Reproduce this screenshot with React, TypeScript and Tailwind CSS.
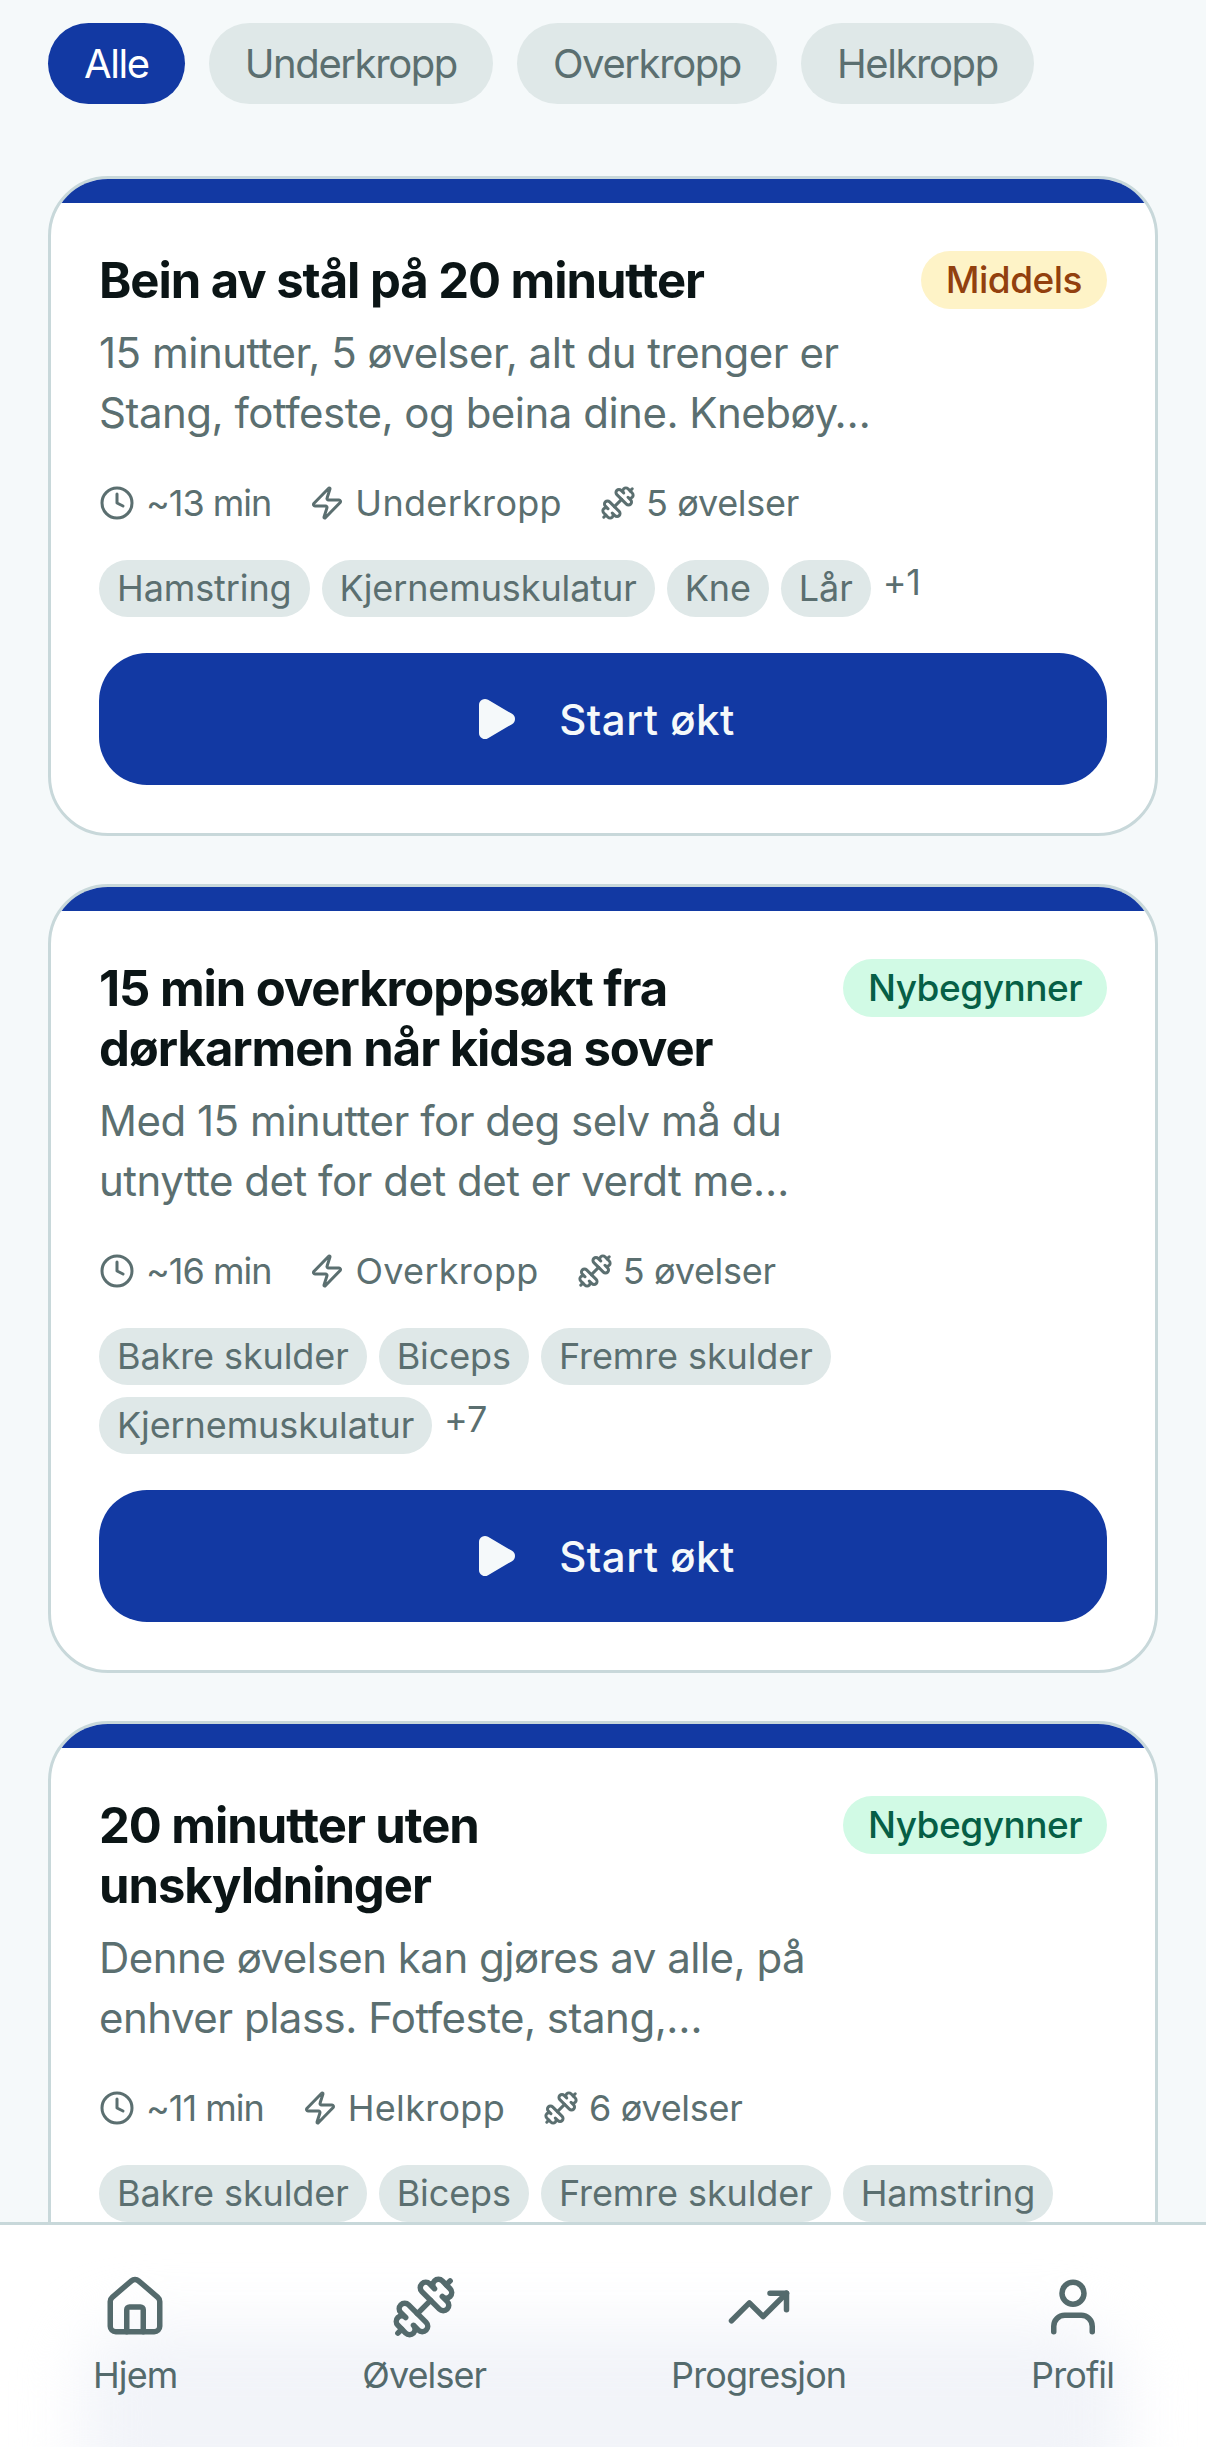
import React from 'react'
import { Clock, Zap, Dumbbell, House, TrendingUp, User, Play } from 'lucide-react'

type Level = 'Middels' | 'Nybegynner'

interface Workout {
  title: string[]
  description: string[]
  duration: string
  area: string
  exercises: string
  level: Level
  tags: string[]
  extra?: string
}

const FILTERS = ['Alle', 'Underkropp', 'Overkropp', 'Helkropp']

const WORKOUTS: Workout[] = [
  {
    title: ['Bein av stål på 20 minutter'],
    description: ['15 minutter, 5 øvelser, alt du trenger er', 'Stang, fotfeste, og beina dine. Knebøy…'],
    duration: '~13 min',
    area: 'Underkropp',
    exercises: '5 øvelser',
    level: 'Middels',
    tags: ['Hamstring', 'Kjernemuskulatur', 'Kne', 'Lår'],
    extra: '+1',
  },
  {
    title: ['15 min overkroppsøkt fra', 'dørkarmen når kidsa sover'],
    description: ['Med 15 minutter for deg selv må du', 'utnytte det for det det er verdt me…'],
    duration: '~16 min',
    area: 'Overkropp',
    exercises: '5 øvelser',
    level: 'Nybegynner',
    tags: ['Bakre skulder', 'Biceps', 'Fremre skulder', 'Kjernemuskulatur'],
    extra: '+7',
  },
  {
    title: ['20 minutter uten', 'unskyldninger'],
    description: ['Denne øvelsen kan gjøres av alle, på', 'enhver plass. Fotfeste, stang,…'],
    duration: '~11 min',
    area: 'Helkropp',
    exercises: '6 øvelser',
    level: 'Nybegynner',
    tags: ['Bakre skulder', 'Biceps', 'Fremre skulder', 'Hamstring'],
  },
]

const NAV_ITEMS = [
  { label: 'Hjem', icon: House },
  { label: 'Øvelser', icon: Dumbbell },
  { label: 'Progresjon', icon: TrendingUp },
  { label: 'Profil', icon: User },
]

const LevelBadge = ({ level }: { level: Level }) => (
  <span
    className={
      level === 'Middels'
        ? 'shrink-0 rounded-full bg-[#fef3c7] px-[25px] py-[5px] text-[37px] leading-[48px] font-medium tracking-[-0.5px] text-[#92400e]'
        : 'shrink-0 rounded-full bg-[#d1fae5] px-[25px] py-[5px] text-[37px] leading-[48px] font-medium tracking-[-0.5px] text-[#065f46]'
    }
  >
    {level}
  </span>
)

const WorkoutCard = ({ workout }: { workout: Workout }) => (
  <article className="shrink-0 overflow-hidden rounded-[60px] border-[3px] border-[#c8d8da] bg-white">
    <div className="h-[24px] bg-[#1239a3]" />
    <div className="flex flex-col px-[48px] pt-[48px] pb-[48px]">
      <div className="flex items-start justify-between gap-[24px]">
        <h2 className="text-[49px] leading-[60px] font-bold tracking-[-1.05px] text-[#0b1516]">
          {workout.title.map((line) => (
            <div key={line}>{line}</div>
          ))}
        </h2>
        <LevelBadge level={workout.level} />
      </div>
      <p className="mt-[12px] text-[42px] leading-[60px] tracking-[-0.5px] text-[#5b6f70]">
        {workout.description.map((line) => (
          <span key={line} className="block">
            {line}
          </span>
        ))}
      </p>
      <div className="mt-[33px] flex items-center gap-[38px] text-[36px] leading-[54px] text-[#5b6f70]">
        <span className="flex items-center gap-[11px] tracking-[-1px]">
          <Clock className="h-[36px] w-[36px]" strokeWidth={2} />
          {workout.duration}
        </span>
        <span className="flex items-center gap-[10px] tracking-[0.3px]">
          <Zap className="h-[36px] w-[36px]" strokeWidth={2} />
          {workout.area}
        </span>
        <span className="flex items-center gap-[10px] tracking-[-0.3px]">
          <Dumbbell className="h-[36px] w-[36px]" strokeWidth={2} />
          {workout.exercises}
        </span>
      </div>
      <div className="mt-[30px] flex flex-wrap gap-x-[12px] gap-y-[12px] text-[36px] leading-[45px] tracking-[-0.1px] text-[#5b6f70]">
        {workout.tags.map((tag) => (
          <span key={tag} className="rounded-full bg-[#dfe8e8] px-[18px] py-[6px]">
            {tag}
          </span>
        ))}
        {workout.extra && <span>{workout.extra}</span>}
      </div>
      <button
        type="button"
        className="mt-[36px] flex h-[132px] w-full items-center justify-center gap-[40px] rounded-[48px] bg-[#1239a3] text-[42px] font-medium tracking-[0.5px] text-[#f5f9fa]"
      >
        <Play className="h-[48px] w-[48px] fill-current" strokeWidth={2} />
        Start økt
      </button>
    </div>
  </article>
)

const BottomNav = () => (
  <nav className="relative flex h-[225px] shrink-0 items-start justify-between overflow-hidden border-t-[3px] border-[#c8d8da] bg-white pt-[49px] pr-[92px] pl-[93px]">
    <div className="absolute top-[100px] right-[80px] bottom-[-60px] left-[80px] rounded-[60px] bg-[#f2f4f9] blur-[30px]" />
    {NAV_ITEMS.map(({ label, icon: Icon }) => (
      <div key={label} className="relative flex flex-col items-center gap-[8px] text-[36px] leading-[54px] tracking-[-0.9px] text-[#546a6c]">
        <Icon className="h-[66px] w-[66px]" strokeWidth={2} />
        {label}
      </div>
    ))}
  </nav>
)

export default function App() {
  return (
    <div className="flex h-[2447px] w-[1206px] flex-col overflow-hidden bg-[#f5f9fa] font-['Inter','Noto_Sans',sans-serif]">
      <main className="flex min-h-0 flex-1 flex-col overflow-hidden px-[48px] pt-[23px]">
        <div className="flex gap-[24px] text-[40px] tracking-[-1.4px]">
          {FILTERS.map((filter) => (
            <button
              key={filter}
              type="button"
              className={
                filter === 'Alle'
                  ? 'h-[81px] rounded-full bg-[#1239a3] px-[36px] text-white'
                  : 'h-[81px] rounded-full bg-[#dfe8e8] px-[36px] text-[#5b6f70]'
              }
            >
              {filter}
            </button>
          ))}
        </div>
        <div className="mt-[72px] flex flex-col gap-[48px]">
          {WORKOUTS.map((workout) => (
            <WorkoutCard key={workout.title[0]} workout={workout} />
          ))}
        </div>
      </main>
      <BottomNav />
    </div>
  )
}
